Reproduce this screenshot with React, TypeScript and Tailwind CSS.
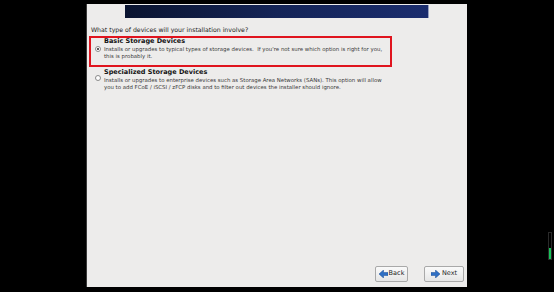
import React from "react";

const font = { fontFamily: '"DejaVu Sans", "Liberation Sans", sans-serif' };

function Arrow({ dir }: { dir: "left" | "right" }) {
  return (
    <svg width="9" height="8" viewBox="0 0 9 8">
      {dir === "right" ? (
        <path d="M0 2.5h4.5V0L9 4 4.5 8V5.5H0z" fill="#2f6fc4" stroke="#1d4f96" strokeWidth="0.5" />
      ) : (
        <path d="M9 2.5H4.5V0L0 4l4.5 4V5.5H9z" fill="#2f6fc4" stroke="#1d4f96" strokeWidth="0.5" />
      )}
    </svg>
  );
}

function Radio({ checked }: { checked?: boolean }) {
  return (
    <div className="w-[6px] h-[6px] rounded-full border border-[#8a8a8a] bg-white flex items-center justify-center shrink-0">
      {checked && <div className="w-[2px] h-[2px] rounded-full bg-[#222]" />}
    </div>
  );
}

export default function App() {
  return (
    <div className="w-[554px] h-[292px] bg-black flex overflow-hidden" style={font}>
      <div className="w-[86px] shrink-0" />
      <div className="mt-[4px] w-[381px] h-[283px] bg-[#edeceb] border-l border-[#3a3a3a] flex flex-col shrink-0">
        <div className="ml-[38px] mt-[1px] w-[304px] h-[13px] bg-gradient-to-r from-[#0a1430] via-[#142457] to-[#1b2d6e] border-r border-[#9aa2c0]" />
        <div className="ml-[4px] mt-[8px] text-[6.2px] leading-[7px] text-[#222]">
          What type of devices will your installation involve?
        </div>
        <div className="ml-[2px] mt-[3px] w-[303px] h-[31px] border-2 border-solid border-[#e0141e] flex">
          <div className="ml-[4px] mt-[8px]">
            <Radio checked />
          </div>
          <div className="ml-[3px] mt-[0px] flex flex-col">
            <div className="font-bold text-[6.5px] leading-[7px] text-[#111]">Basic Storage Devices</div>
            <div className="mt-[1px] text-[5.4px] leading-[7px] text-[#3a3a3a] whitespace-nowrap">
              Installs or upgrades to typical types of storage devices.&nbsp; If you're not sure which option is right for you,
              <br />
              this is probably it.
            </div>
          </div>
        </div>
        <div className="ml-[2px] mt-[1px] flex">
          <div className="ml-[6px] mt-[7px]">
            <Radio />
          </div>
          <div className="ml-[3px] mt-[1px] flex flex-col">
            <div className="font-bold text-[6.5px] leading-[7px] text-[#111]">Specialized Storage Devices</div>
            <div className="mt-[1px] text-[5.4px] leading-[7px] text-[#3a3a3a] whitespace-nowrap">
              Installs or upgrades to enterprise devices such as Storage Area Networks (SANs). This option will allow
              <br />
              you to add FCoE / iSCSI / zFCP disks and to filter out devices the installer should ignore.
            </div>
          </div>
        </div>
        <div className="flex-1" />
        <div className="flex justify-end gap-[16px] pr-[3px] pb-[5px]">
          <div className="w-[33px] h-[16px] bg-gradient-to-b from-[#fafafa] to-[#e6e6e6] border border-[#a9a9a9] rounded-[2px] flex items-center justify-center gap-[1px] text-[6.5px] text-[#222]">
            <Arrow dir="left" />
            <span>Back</span>
          </div>
          <div className="w-[40px] h-[16px] bg-gradient-to-b from-[#fafafa] to-[#e6e6e6] border border-[#a9a9a9] rounded-[2px] flex items-center justify-center gap-[2px] text-[6.5px] text-[#222]">
            <Arrow dir="right" />
            <span>Next</span>
          </div>
        </div>
      </div>
      <div className="flex-1 flex">
        <div className="ml-[81px] mt-[232px] w-[4px] h-[28px] border border-[#2a2a2a] flex flex-col justify-end">
          <div className="h-[11px] bg-[#19c25a]" />
        </div>
      </div>
    </div>
  );
}
